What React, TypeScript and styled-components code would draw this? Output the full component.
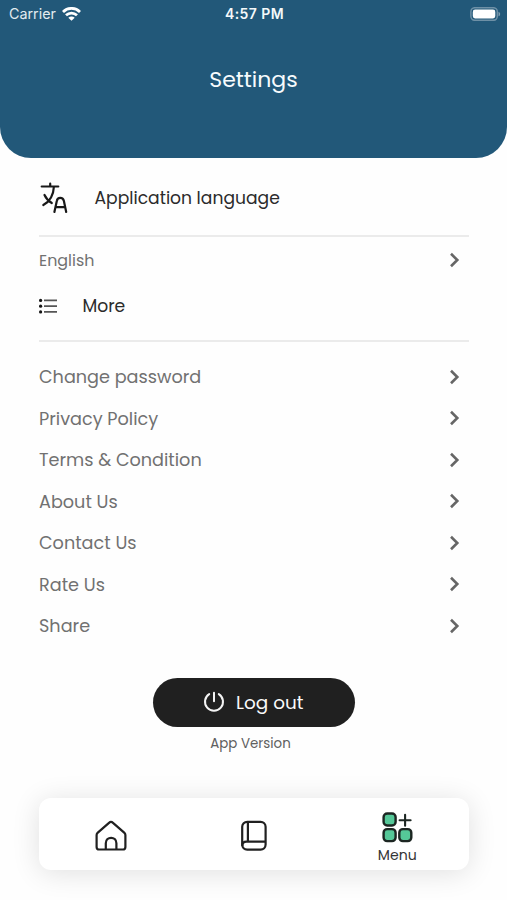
import React from "react";
import styled, { createGlobalStyle } from "styled-components";

const GlobalStyle = createGlobalStyle`
  * { box-sizing: border-box; }
  body { margin: 0; background: #fff; font-family: Poppins, Inter, sans-serif; }
  svg { display: block; flex: none; }
`;

const Screen = styled.div`
  width: 507px;
  height: 900px;
  display: flex;
  flex-direction: column;
  background: #fefefe;
  overflow: hidden;
`;

const Header = styled.header`
  height: 158px;
  flex: none;
  background: #225879;
  border-radius: 0 0 31px 31px;
  color: #f7fbfd;
`;

const StatusBar = styled.div`
  height: 27px;
  padding: 0 6px 0 9px;
  display: grid;
  grid-template-columns: 1fr auto 1fr;
  align-items: center;
  font-family: Inter, sans-serif;
  font-size: 14.3px;
  color: #e3ebf0;
`;

const Carrier = styled.div`
  display: flex;
  align-items: center;
  gap: 6px;
`;

const Clock = styled.div`
  margin-right: 1px;
  font-size: 14px;
  font-weight: 600;
  letter-spacing: 0.4px;
  color: #f4f8fa;
`;

const Battery = styled.div`
  justify-self: end;
`;

const Title = styled.h1`
  margin: 36px 0 0;
  font-size: 22px;
  line-height: 34px;
  font-weight: 400;
  text-align: center;
`;

const Content = styled.main`
  width: 430px;
  margin-left: 39px;
  flex: none;
`;

const SectionHead = styled.div<{ $height: number; $gap: number; $pad: number; $top: number; $bottom: number }>`
  height: ${(p) => p.$height}px;
  padding: ${(p) => p.$top}px 0 ${(p) => p.$bottom}px ${(p) => p.$pad}px;
  display: flex;
  align-items: center;
  gap: ${(p) => p.$gap}px;
  border-bottom: 2px solid #ebebeb;
  font-size: 17.15px;
  color: #2b2b2b;
`;

const Row = styled.div<{ $height?: number; $size?: number }>`
  height: ${(p) => p.$height ?? 41.5}px;
  padding-right: 8px;
  display: flex;
  align-items: center;
  justify-content: space-between;
  font-size: ${(p) => p.$size ?? 17.65}px;
  color: #717171;
`;

const List = styled.div`
  padding-top: 14.5px;
`;

const LogoutButton = styled.button`
  width: 202.5px;
  height: 49px;
  margin: 31px auto 0 113.5px;
  padding: 0 1px 0 0;
  border: 0;
  border-radius: 25px;
  background: #202020;
  color: #fafafa;
  font: 400 18.4px Poppins, Inter, sans-serif;
  display: flex;
  align-items: center;
  justify-content: center;
  gap: 11px;
`;

const Version = styled.div`
  margin: 7px 7px 0 0;
  text-align: center;
  font-size: 13.4px;
  line-height: 20px;
  color: #606060;
`;

const TabBar = styled.nav`
  width: 430px;
  height: 72px;
  margin: auto 0 30.5px 39px;
  flex: none;
  display: grid;
  grid-template-columns: repeat(3, 1fr);
  background: #fff;
  border-radius: 12px;
  box-shadow: 0 3px 28px rgba(0, 0, 0, 0.12);
`;

const Tab = styled.div`
  display: flex;
  flex-direction: column;
  align-items: center;
  justify-content: center;
  padding-top: 5px;
`;

const MenuTab = styled(Tab)`
  justify-content: flex-start;
  padding-top: 14px;
`;

const TabLabel = styled.span`
  margin-top: 2.5px;
  font-size: 14.1px;
  line-height: 20px;
  color: #353535;
`;

const Chevron = () => (
  <svg width="12" height="16" viewBox="0 0 12 16" fill="none" stroke="#666" strokeWidth="2.6">
    <path d="M2 1.8 8.3 8 2 14.2" />
  </svg>
);

const WifiIcon = () => (
  <svg width="19" height="14" viewBox="0 0 19 14" fill="none" stroke="#fff" strokeWidth="2.8">
    <path d="M1 4.9C5.8.2 13.2.2 18 4.9M4 8.3c3.2-3 7.8-3 11 0" />
    <path d="M9.5 13.7 6.3 10.7c1.9-1.5 4.5-1.5 6.4 0Z" fill="#fff" stroke="none" />
  </svg>
);

const BatteryIcon = () => (
  <svg width="31" height="14" viewBox="0 0 31 14">
    <rect x="0.9" y="0.7" width="26.4" height="12.6" rx="4" fill="none" stroke="#6e90a6" strokeWidth="1.5" />
    <rect x="2.8" y="2.6" width="22.5" height="8.8" rx="2.3" fill="#fff" />
    <path d="M28.5 4.7c2.2.8 2.2 3.8 0 4.6Z" fill="#809db0" />
  </svg>
);

const LanguageIcon = () => (
  <svg width="28" height="32" viewBox="0 0 28 32" fill="none" stroke="#181818" strokeWidth="2.2" strokeLinecap="round" strokeLinejoin="round">
    <path d="M1.7 4.5h16.6M10.2 1.7v2.8M13.9 4.7C13.5 13 9.7 19.5 3.3 23M4.5 13c1.5 3.3 4 6.2 7.3 8" />
    <path d="M14.4 30l2.4-11c.7-4.2 6.2-4.2 7.1 0l2.3 11M15.9 25.2h9.2" />
  </svg>
);

const ListIcon = () => (
  <svg width="19" height="16" viewBox="0 0 19 16">
    <path d="M5 2.4H18M5 8.2H18M5 13.9H18" stroke="#555" strokeWidth="1.8" />
    <g fill="#151515">
      <circle cx="1.6" cy="2.4" r="1.6" />
      <circle cx="1.6" cy="8.2" r="1.6" />
      <circle cx="1.6" cy="13.9" r="1.6" />
    </g>
  </svg>
);

const PowerIcon = () => (
  <svg width="22" height="22" viewBox="0 0 22 22" fill="none" stroke="#f4f4f4" strokeWidth="2" strokeLinecap="round">
    <path d="M11 1.7v8.6M6.2 3.1a9 9 0 1 0 9.6 0" />
  </svg>
);

const HomeIcon = () => (
  <svg width="32" height="32" viewBox="0 0 32 32" fill="none" stroke="#202020" strokeWidth="2.2" strokeLinejoin="round">
    <path d="M14 2.8 2.8 12.6c-.8.7-1.2 1.5-1.2 2.5v11.8c0 1.7.9 2.6 2.6 2.6h23.6c1.7 0 2.6-.9 2.6-2.6V15.1c0-1-.4-1.8-1.2-2.5L18 2.8c-1.3-1.1-2.7-1.1-4 0Z" />
    <path d="M10.8 29.5v-6.3c0-7.2 10.6-7.2 10.6 0v6.3" />
  </svg>
);

const BookIcon = () => (
  <svg width="28" height="32" viewBox="0 0 28 32" fill="none" stroke="#202020" strokeWidth="2.2">
    <rect x="2.2" y="1.8" width="23.4" height="27.8" rx="5" />
    <path d="M7.9 2v19.7M2.3 26v-.2c0-2.5 1.6-4.1 4.1-4.1h19" />
  </svg>
);

const MenuIcon = () => (
  <svg width="31" height="31" viewBox="0 0 31 31" stroke="#1c2622" strokeWidth="2.4" fill="#55c898">
    <rect x="1.6" y="1.5" width="12" height="12" rx="3.6" />
    <rect x="1.6" y="17.1" width="12" height="12" rx="3.6" />
    <rect x="17.3" y="17.1" width="12" height="12" rx="3.6" />
    <path d="M23.1 2.8v11M17.6 8.3h11" strokeWidth="2.1" strokeLinecap="round" />
  </svg>
);

const links = ["Change password", "Privacy Policy", "Terms & Condition", "About Us", "Contact Us", "Rate Us", "Share"];

export default function App() {
  return (
    <Screen>
      <GlobalStyle />
      <Header>
        <StatusBar>
          <Carrier>
            Carrier
            <WifiIcon />
          </Carrier>
          <Clock>4:57 PM</Clock>
          <Battery>
            <BatteryIcon />
          </Battery>
        </StatusBar>
        <Title>Settings</Title>
      </Header>
      <Content>
        <SectionHead $height={79} $gap={26.5} $pad={1} $top={2} $bottom={0}>
          <LanguageIcon />
          Application language
        </SectionHead>
        <Row $height={46} $size={15.9}>
          English
          <Chevron />
        </Row>
        <SectionHead $height={58.5} $gap={24.5} $pad={0} $top={0} $bottom={11}>
          <ListIcon />
          More
        </SectionHead>
        <List>
          {links.map((label) => (
            <Row key={label}>
              {label}
              <Chevron />
            </Row>
          ))}
        </List>
        <LogoutButton>
          <PowerIcon />
          Log out
        </LogoutButton>
        <Version>App Version</Version>
      </Content>
      <TabBar>
        <Tab>
          <HomeIcon />
        </Tab>
        <Tab>
          <BookIcon />
        </Tab>
        <MenuTab>
          <MenuIcon />
          <TabLabel>Menu</TabLabel>
        </MenuTab>
      </TabBar>
    </Screen>
  );
}
